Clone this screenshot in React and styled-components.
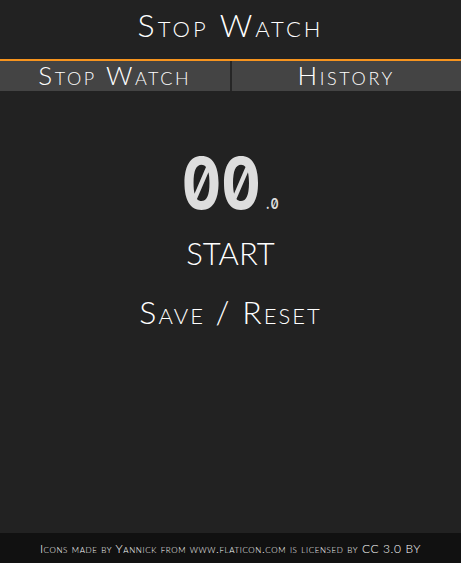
import React from "react";
import styled, { createGlobalStyle } from "styled-components";

const Global = createGlobalStyle`
  html, body { margin: 0; padding: 0; background: #222222; height: 100%; }
  #root { height: 100%; }
`;

const Page = styled.div`
  height: 563px;
  display: flex;
  flex-direction: column;
  background: #222222;
  color: #ffffff;
  font-family: Lato, "Open Sans", sans-serif;
  font-weight: 300;
  font-variant: small-caps;
`;

const Header = styled.h1`
  margin: 0;
  height: 61px;
  box-sizing: border-box;
  padding-bottom: 10px;
  display: flex;
  align-items: center;
  justify-content: center;
  font-size: 32px;
  font-weight: 300;
  letter-spacing: 3px;
  border-bottom: 2px solid #f7941e;
`;

const Tabs = styled.nav`
  display: flex;
  gap: 2px;
  background: #262626;
`;

const Tab = styled.button`
  flex: 1;
  height: 30px;
  border: none;
  padding: 0 0 2px;
  background: #444444;
  color: #ffffff;
  font: inherit;
  font-variant: small-caps;
  font-size: 26px;
  letter-spacing: 2.6px;
  line-height: 28px;
`;

const Main = styled.main`
  flex: 1;
  display: flex;
  flex-direction: column;
  align-items: center;
  padding-top: 56px;
`;

const Timer = styled.div`
  display: flex;
  align-items: baseline;
  color: #dddddd;
  font-family: Inter, "DejaVu Sans Mono", monospace;
  font-variant: normal;
  font-feature-settings: "zero" 1, "tnum" 1;
  transform: scaleX(0.85);
  margin-left: 0;
`;

const Big = styled.span`
  font-size: 72px;
  font-weight: 700;
  line-height: 72px;
`;

const Small = styled.span`
  font-size: 15px;
  font-weight: 600;
  margin-left: 6px;
  letter-spacing: 1.5px;
`;

const Action = styled.button`
  border: none;
  background: transparent;
  color: #ffffff;
  font: inherit;
  font-variant: small-caps;
  font-size: ${(p) => p.$size}px;
  letter-spacing: ${(p) => p.$ls}px;
  padding: 0;
  margin-top: ${(p) => p.$mt}px;
`;

const Footer = styled.footer`
  height: 30px;
  background: #111111;
  display: flex;
  align-items: center;
  justify-content: center;
  font-size: 12px;
  letter-spacing: 0.6px;
`;

export default function App() {
  return (
    <>
      <Global />
      <Page>
        <Header>Stop Watch</Header>
        <Tabs>
          <Tab>Stop Watch</Tab>
          <Tab>History</Tab>
        </Tabs>
        <Main>
          <Timer>
            <Big>00</Big>
            <Small>.0</Small>
          </Timer>
          <Action $size={31} $ls={0} $mt={15}>START</Action>
          <Action $size={32} $ls={2} $mt={20}>Save / Reset</Action>
        </Main>
        <Footer>Icons made by Yannick from www.flaticon.com is licensed by CC 3.0 BY</Footer>
      </Page>
    </>
  );
}
